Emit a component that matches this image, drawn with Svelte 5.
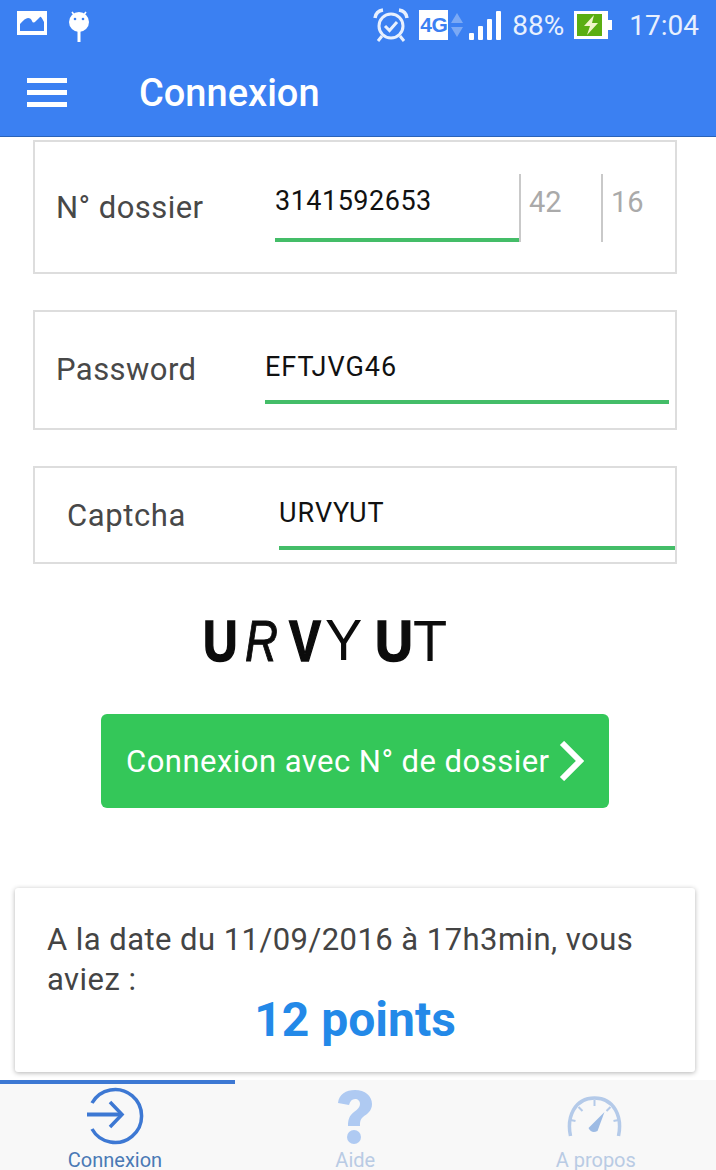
<script>
  const tabs = [
    { label: 'Connexion', active: true, icon: 'in' },
    { label: 'Aide', active: false, icon: 'help' },
    { label: 'A propos', active: false, icon: 'gauge' }
  ];
</script>

<div class="page">
  <header class="header">
    <div class="status">
      <div class="status-left">
        <svg class="ic-photo" width="30" height="24" viewBox="0 0 30 24"><rect width="30" height="24" fill="#fff"/><path d="M3 20V13Q8 7 11 7T15 10T19 10T23 6T27 11V20Z" fill="#3b80f2"/></svg>
        <svg class="ic-droid" width="22" height="32" viewBox="0 0 22 32"><path d="M4 2L7 6M18 2L15 6" stroke="#fff" stroke-width="1.6"/><circle cx="11" cy="12" r="10" fill="#fff"/><rect x="9.5" y="21" width="3" height="11" fill="#fff"/><circle cx="7" cy="9" r="1.3" fill="#3b80f2"/><circle cx="15" cy="9" r="1.3" fill="#3b80f2"/></svg>
      </div>
      <div class="status-right">
        <svg width="36" height="34" viewBox="0 0 36 34" fill="none" stroke="#e8f0fe"><circle cx="18" cy="18" r="12" stroke-width="3"/><path d="M12 18L16.500 22.500L24 14" stroke-width="3"/><path d="M2 10Q3 3 10 2M34 10Q33 3 26 2" stroke-width="3.500"/><path d="M9 28L5 33M27 28L31 33" stroke-width="3"/></svg>
        <span class="lte">4G</span>
        <svg class="arrows" width="12" height="24" viewBox="0 0 12 24"><path d="M6 0L12 10H0Z" fill="#7ba9f5"/><path d="M6 24L12 14H0Z" fill="#7ba9f5"/></svg>
        <svg class="signal" width="32" height="30" viewBox="0 0 32 30" fill="#fff"><rect x="0" y="23" width="5" height="7" rx="1"/><rect x="9" y="16" width="5" height="14" rx="1"/><rect x="18" y="9" width="5" height="21" rx="1"/><rect x="27" y="1" width="5" height="29" rx="1"/></svg>
        <span class="pct">88%</span>
        <svg class="battery" width="38" height="28" viewBox="0 0 38 28"><rect width="34" height="28" fill="#fff"/><rect x="3" y="3" width="25" height="22" fill="#5aae12"/><rect x="34" y="9" width="4" height="10" fill="#fff"/><path d="M20 4L10 15H16L13 24L24 12H18Z" fill="#f0f5c8"/></svg>
        <span class="clock">17:04</span>
      </div>
    </div>
    <div class="appbar">
      <div class="burger"><i></i><i></i><i></i></div>
      <h1>Connexion</h1>
    </div>
  </header>

  <main class="content">
    <section class="field first">
      <span class="label">N° dossier</span>
      <div class="input num">3141592653</div>
      <div class="side one">42</div>
      <div class="side two">16</div>
    </section>

    <section class="field second">
      <span class="label">Password</span>
      <div class="input pw">EFTJVG46</div>
    </section>

    <section class="field third">
      <span class="label">Captcha</span>
      <div class="input cap">URVYUT</div>
    </section>

    <div class="captcha" aria-label="captcha">
      <b class="u">U</b><i class="r">R</i><b class="v">V</b><span class="y">Y</span><b class="u2">U</b><span class="t">T</span>
    </div>

    <button class="cta">
      <span>Connexion avec N° de dossier</span>
      <svg width="26" height="40" viewBox="0 0 26 40" fill="none"><path d="M4 2L22 20L4 38" stroke="#fff" stroke-width="6"/></svg>
    </button>

    <section class="card">
      <p>A la date du 11/09/2016 à 17h3min, vous aviez :</p>
      <strong>12 points</strong>
    </section>
  </main>

  <nav class="tabs">
    {#each tabs as t}
      <div class="tab" class:active={t.active}>
        {#if t.icon === 'in'}
          <svg width="60" height="60" viewBox="0 0 60 60" fill="none" stroke="#3d78d3"><path d="M7 16A26.500 26.500 0 1 1 7 42" stroke-width="3.500"/><path d="M2 27.500H36" stroke-width="4"/><path d="M25 15L37 27.500L25 40" stroke-width="3.500"/></svg>
        {:else if t.icon === 'help'}
          <svg width="40" height="60" viewBox="0 0 40 60"><path d="M3 16C4 7 11 3 20 3C30 3 37 9 37 17C37 24 32 27 28 30C25 33 25 35 25 39H13C13 33 14 29 19 25C23 22 25 20 25 17C25 14 23 12 20 12C17 12 15 14 14 18Z" fill="#afcaf2"/><circle cx="19" cy="50" r="7" fill="#afcaf2"/></svg>
        {:else}
          <svg width="60" height="60" viewBox="0 0 60 60" fill="none" stroke="#b4cae9"><path d="M4.500 49C.5 30 8.500 11 28.500 11S56.500 30 52.500 49" stroke-width="3.500"/><path d="M28.500 13V19M12.500 20L16.500 24M44.500 20L40.500 24M4.500 33L9.500 34M52.500 33L47.500 34" stroke-width="2"/><path d="M22.500 41L38.500 25L31.500 44Q25.500 47 22.500 41Z" fill="#9dbbe4" stroke="none"/></svg>
        {/if}
        <span>{t.label}</span>
      </div>
    {/each}
  </nav>
</div>

<style>
  :global(body) { margin: 0; background: #fff; }
  .page {
    width: 716px; height: 1170px; overflow: hidden;
    display: flex; flex-direction: column;
    font-family: Roboto, "Liberation Sans", sans-serif;
  }
  .header {
    height: 136px; flex: none; background: #3b80f2;
    border-bottom: 1px solid #2a63b8; color: #fff;
    display: flex; flex-direction: column;
  }
  .status {
    height: 48px; display: flex; justify-content: space-between; align-items: center;
    padding: 0 17px;
  }
  .status-left { display: flex; align-items: center; gap: 21px; }
  .ic-photo { margin-top: -3px; }
  .ic-droid { margin-top: 3px; }
  .status-right { display: flex; align-items: center; color: #e8f0fe; font-size: 28px; margin-top: 2px; }
  .lte {
    width: 29px; height: 30px; margin-left: 10px; background: #fff; color: #3b80f2;
    font: 700 21px/30px "Liberation Sans", sans-serif; text-align: center;
    letter-spacing: -.5px;
  }
  .arrows { margin-left: 3px; }
  .signal { margin-left: 6px; }
  .pct { margin-left: 11px; }
  .battery { margin-left: 10px; }
  .clock { margin-left: 17px; }
  .appbar { display: flex; align-items: center; flex: 1; padding: 2px 0 0 27px; }
  .burger { width: 40px; display: flex; flex-direction: column; gap: 7px; margin-top: -2px; }
  .burger i { display: block; height: 5px; background: #fff; }
  h1 { margin: 0 0 0 72px; font-size: 38px; font-weight: 500; line-height: 1; }

  .content { flex: 1; display: flex; flex-direction: column; min-height: 0; }
  .field {
    box-sizing: border-box; margin: 0 39px 0 33px; border: 2px solid #ddd;
    position: relative; display: flex; color: #444;
  }
  .first { height: 134px; margin-top: 3px; }
  .second { height: 120px; margin-top: 36px; }
  .third { height: 98px; margin-top: 36px; }
  .label { font-size: 31px; letter-spacing: .45px; color: #484848; line-height: 36px; }
  .first .label { margin: 48px 0 0 21px; width: 219px; flex: none; }
  .second .label { margin: 40px 0 0 21px; width: 209px; flex: none; }
  .third .label { margin: 30px 0 0 32px; width: 212px; flex: none; letter-spacing: .6px; }
  .input {
    box-sizing: border-box; color: #111; font-size: 27px; letter-spacing: .5px;
    border-bottom: 4px solid #44bd68; line-height: 32px; flex: none;
  }
  .num { width: 244px; margin-top: 32px; padding-top: 11px; height: 68px; }
  .pw { width: 404px; height: 92px; padding-top: 39px; letter-spacing: 1px; }
  .cap { width: 396px; height: 82px; padding-top: 29px; letter-spacing: 1px; }
  .side {
    box-sizing: border-box; height: 68px; margin-top: 32px; flex: none;
    border-left: 2px solid #c9c9c9; color: #aaa; font-size: 29px;
    padding: 12px 0 0 8px; line-height: 32px;
  }
  .one { width: 82px; }
  .two { width: 60px; padding-left: 8px; }
  .captcha {
    margin-top: 52px; height: 50px; padding-left: 203px; white-space: nowrap;
    font: 57px/50px "Liberation Sans", sans-serif; color: #0c0c0c;
    display: flex; align-items: center;
  }
  .captcha > * { display: block; flex: none; transform-origin: left center; }
  .u { width: 42px; font-weight: 700; transform: scaleX(.84); -webkit-text-stroke: 1.5px #0c0c0c; }
  .r { width: 44px; transform: scaleX(.8); -webkit-text-stroke: 1px #0c0c0c; }
  .v { width: 36px; font-weight: 700; transform: scaleX(.84); -webkit-text-stroke: 1.5px #0c0c0c; }
  .y { width: 50px; transform: scaleX(.98); margin-top: -3px; }
  .u2 { width: 38px; font-weight: 700; transform: scaleX(.92); -webkit-text-stroke: 1.5px #0c0c0c; }
  .t { transform: scaleX(.98); }

  .cta {
    width: 508px; height: 94px; margin: 48px 0 0 101px; border: 0; border-radius: 6px;
    background: #34c759; color: #fff; font: 400 31px Roboto, sans-serif; letter-spacing: .47px;
    display: flex; align-items: center; padding: 0 0 0 25px; gap: 8px;
  }
  .cta span { white-space: nowrap; }
  .card {
    box-sizing: border-box; width: 680px; height: 184px; margin: 80px 0 0 15px;
    background: #fff; border-radius: 3px; padding: 32px 32px 0;
    box-shadow: 0 1px 5px rgba(0,0,0,.3);
    color: #444;
  }
  .card p { margin: 0; font-size: 31px; line-height: 40px; letter-spacing: .45px; }
  .card strong {
    display: block; text-align: center; color: #2389e8; font-size: 48px; font-weight: 700;
    line-height: 40px;
  }
  .tabs {
    height: 90px; flex: none; background: #f8f8f8; display: flex;
  }
  .tab {
    flex: 1; display: flex; flex-direction: column; align-items: center;
    box-sizing: border-box; padding-top: 3px; color: #b9cbe4; font-size: 20px;
    border-top: 4px solid transparent;
  }
  .tab svg { height: 60px; flex: none; }
  .tab span { line-height: 20px; height: 20px; margin-top: 3px; }
  .tab.active {
    flex: 0 0 235px; padding-right: 5px; border-top-color: #3d78d3; color: #4a79b5;
  }
</style>
